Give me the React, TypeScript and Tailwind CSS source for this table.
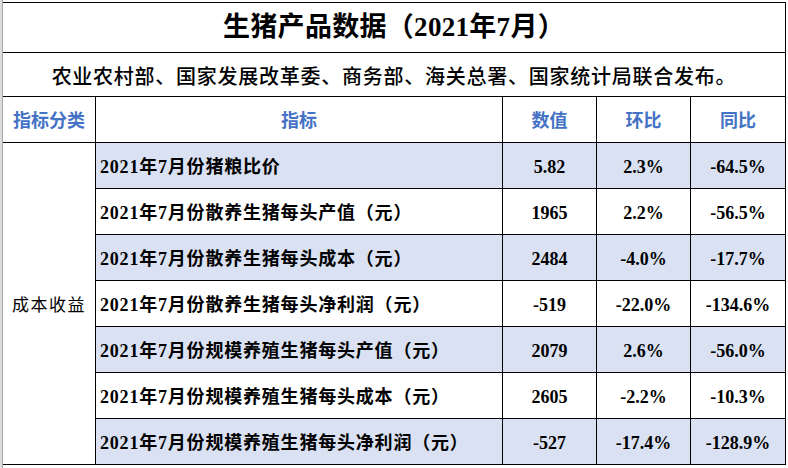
import React from "react";

const rows = [
  { name: "2021年7月份猪粮比价", v: "5.82", h: "2.3%", t: "-64.5%" },
  { name: "2021年7月份散养生猪每头产值（元）", v: "1965", h: "2.2%", t: "-56.5%" },
  { name: "2021年7月份散养生猪每头成本（元）", v: "2484", h: "-4.0%", t: "-17.7%" },
  { name: "2021年7月份散养生猪每头净利润（元）", v: "-519", h: "-22.0%", t: "-134.6%" },
  { name: "2021年7月份规模养殖生猪每头产值（元）", v: "2079", h: "2.6%", t: "-56.0%" },
  { name: "2021年7月份规模养殖生猪每头成本（元）", v: "2605", h: "-2.2%", t: "-10.3%" },
  { name: "2021年7月份规模养殖生猪每头净利润（元）", v: "-527", h: "-17.4%", t: "-128.9%" },
];

const serif = { fontFamily: '"Liberation Serif", "Noto Sans CJK SC", serif' };

export default function App() {
  return (
    <div className="w-[788px] h-[468px] bg-white flex pt-[2px] overflow-hidden">
      <div className="w-[3px] -mt-[2px] h-[468px] bg-[#dcdcdc] border-r border-[#a8a8a8]" />
      <div className="w-[783px] border-t border-r border-black flex flex-col self-start">
        <div
          className="h-[50px] border-b border-black flex items-center justify-center text-[27px] font-bold text-black tracking-[0.3px]"
          style={serif}
        >
          生猪产品数据（2021年7月）
        </div>
        <div
          className="h-[44px] border-b border-black flex items-center justify-center text-[20px] font-medium tracking-[0.75px] text-black pt-[2px]"
          style={{ fontFamily: '"Noto Sans CJK SC", sans-serif' }}
        >
          农业农村部、国家发展改革委、商务部、海关总署、国家统计局联合发布。
        </div>
        <div
          className="h-[46px] border-b border-black grid grid-cols-[93px_407px_94px_94px_94px] text-[18px] font-bold text-[#4472c4]"
          style={{ fontFamily: '"Noto Sans CJK SC", sans-serif' }}
        >
          <div className="border-r border-black flex items-center justify-center">指标分类</div>
          <div className="border-r border-black flex items-center justify-center">指标</div>
          <div className="border-r border-black flex items-center justify-center">数值</div>
          <div className="border-r border-black flex items-center justify-center">环比</div>
          <div className="flex items-center justify-center">同比</div>
        </div>
        <div className="flex">
          <div
            className="w-[93px] border-r border-b border-black flex items-center justify-center text-[17px] tracking-[1.5px] text-black"
            style={{ fontFamily: '"Noto Sans CJK SC", sans-serif' }}
          >
            成本收益
          </div>
          <div className="flex flex-col">
            {rows.map((r, i) => (
              <div
                key={i}
                className={
                  "h-[46px] border-b border-black grid grid-cols-[407px_94px_94px_94px] text-[18px] font-bold text-black " +
                  (i % 2 === 0 ? "bg-[#d9e1f2]" : "bg-white")
                }
                style={serif}
              >
                <div className="border-r border-black flex items-center pl-[4px] pt-[4px] tracking-[0.8px] whitespace-nowrap">
                  {r.name}
                </div>
                <div className="border-r border-black flex items-center justify-center pt-[4px]">{r.v}</div>
                <div className="border-r border-black flex items-center justify-center pt-[4px]">{r.h}</div>
                <div className="flex items-center justify-center pt-[4px]">{r.t}</div>
              </div>
            ))}
          </div>
        </div>
      </div>
    </div>
  );
}
